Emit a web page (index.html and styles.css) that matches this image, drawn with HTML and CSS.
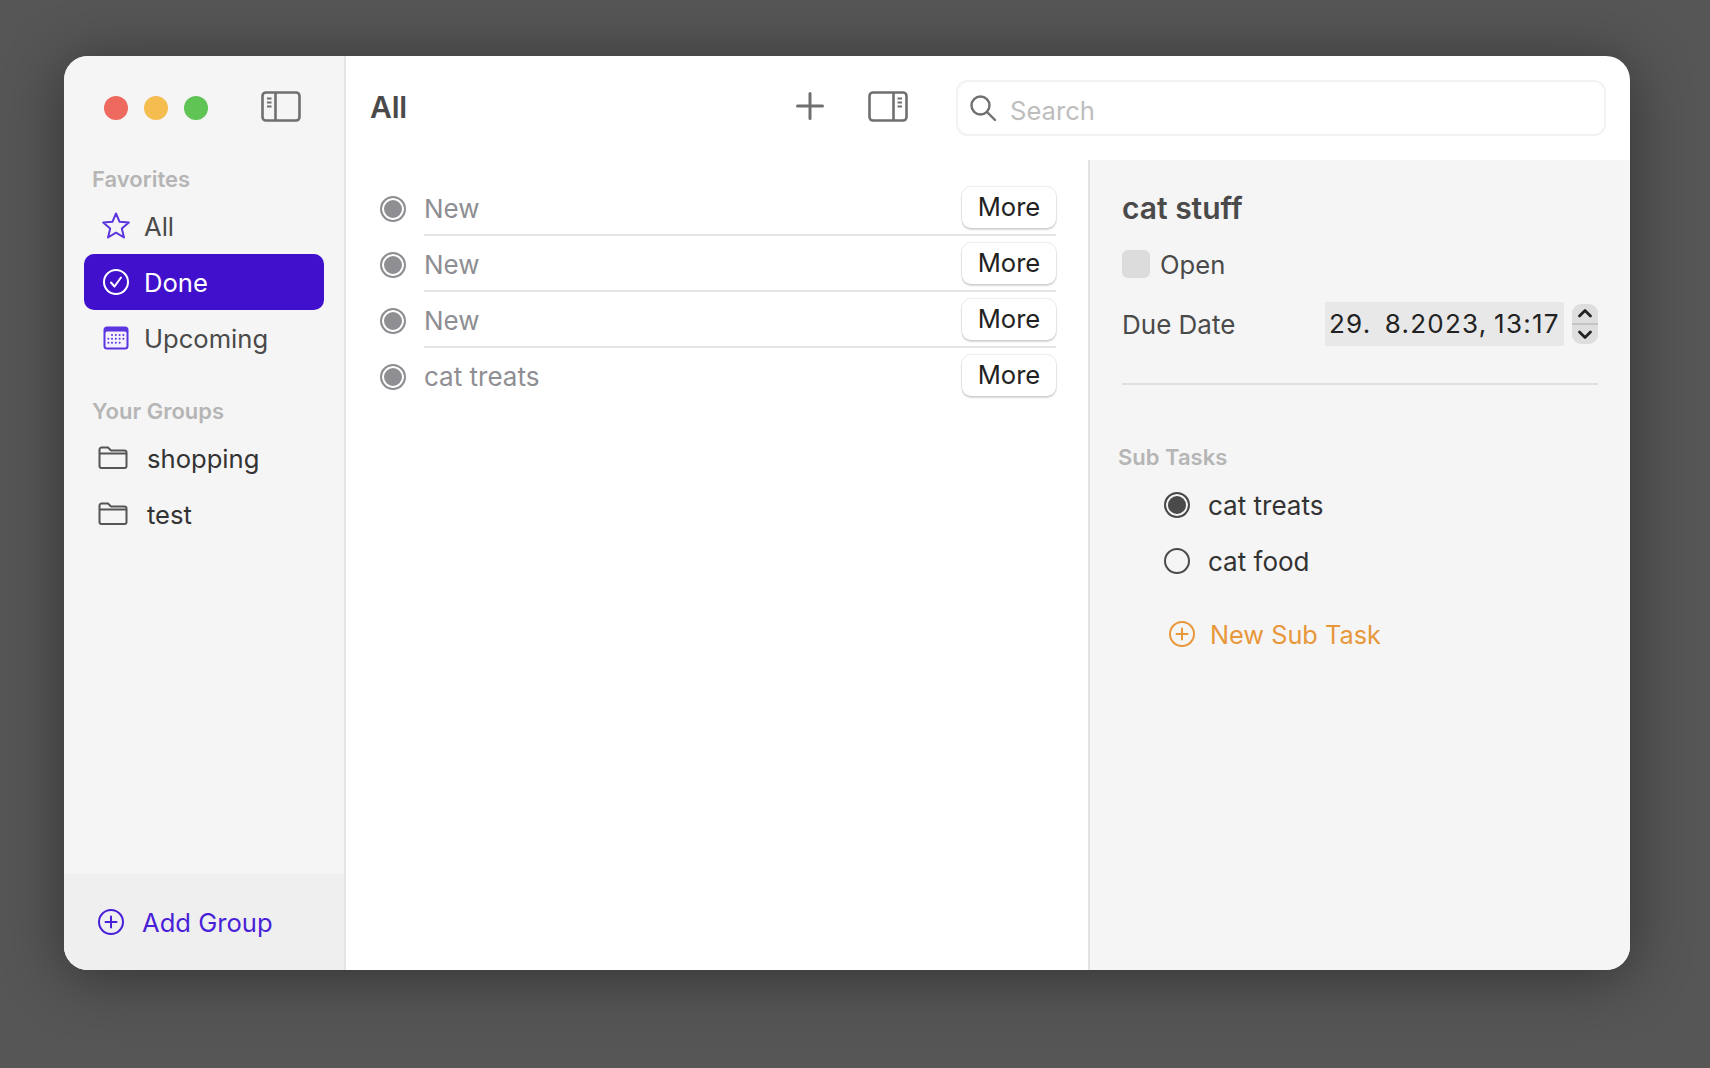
FILE: index.html
```html
<!DOCTYPE html>
<html lang="en">
<head>
<meta charset="utf-8">
<title>Tasks</title>
<link rel="stylesheet" href="styles.css">
</head>
<body>
<div class="window">
  <aside class="sidebar">
    <div class="side-top">
      <div class="titlebar">
        <span class="light red"></span><span class="light yellow"></span><span class="light green"></span>
        <svg class="side-toggle" width="40" height="31" viewBox="0 0 40 31" fill="none" stroke="#6f6f6f" stroke-width="2.6"><rect x="1.500" y="1.500" width="37" height="28" rx="3.500"/><path d="M14.500 1.500v28"/><path d="M6 7.500h4.500M6 11.500h4.500M6 15.500h4.500" stroke-width="1.800"/></svg>
      </div>
      <div class="section-label">Favorites</div>
      <div class="side-row">
        <svg class="ico" width="30" height="30" viewBox="0 0 30 30" fill="none" stroke="#5b35e0" stroke-width="2" stroke-linejoin="round"><path d="M15 2.500l3.600 8.300 9.200.8-7 6 2.200 8.900-8-4.800-8 4.800 2.200-8.900-7-6 9.200-.8z"/></svg>
        <span>All</span>
      </div>
      <div class="side-row selected">
        <svg class="ico" width="30" height="30" viewBox="0 0 30 30" fill="none" stroke="#fff" stroke-width="2"><circle cx="15" cy="15" r="12"/><path d="M10 15.500l3.500 4 6.500-9" stroke-linecap="round" stroke-linejoin="round"/></svg>
        <span>Done</span>
      </div>
      <div class="side-row">
        <svg class="ico" width="30" height="30" viewBox="0 0 30 30"><rect x="2.500" y="3.500" width="25" height="23" rx="3.500" fill="#5b35e0"/><rect x="4.500" y="8.500" width="21" height="16" rx="1.500" fill="#f4f1fd"/><g fill="#5b35e0"><circle cx="11" cy="12" r="1"/><circle cx="14.800" cy="12" r="1"/><circle cx="18.600" cy="12" r="1"/><circle cx="22.400" cy="12" r="1"/><circle cx="7.400" cy="15.800" r="1"/><circle cx="11" cy="15.800" r="1"/><circle cx="14.800" cy="15.800" r="1"/><circle cx="18.600" cy="15.800" r="1"/><circle cx="22.400" cy="15.800" r="1"/><circle cx="7.400" cy="19.800" r="1"/><circle cx="11" cy="19.800" r="1"/><circle cx="14.800" cy="19.800" r="1"/><circle cx="18.600" cy="19.800" r="1"/></g></svg>
        <span>Upcoming</span>
      </div>
      <div class="section-label groups">Your Groups</div>
      <div class="side-row group">
        <svg class="folder" width="30" height="24" viewBox="0 0 30 24" fill="none" stroke="#555" stroke-width="2"><path d="M1.500 20V3.500A2 2 0 0 1 3.500 1.500h6.500l3 3h13.500a2 2 0 0 1 2 2V20a2 2 0 0 1-2 2h-23a2 2 0 0 1-2-2z"/><path d="M1.500 7.500h27"/></svg>
        <span>shopping</span>
      </div>
      <div class="side-row group">
        <svg class="folder" width="30" height="24" viewBox="0 0 30 24" fill="none" stroke="#555" stroke-width="2"><path d="M1.500 20V3.500A2 2 0 0 1 3.500 1.500h6.500l3 3h13.500a2 2 0 0 1 2 2V20a2 2 0 0 1-2 2h-23a2 2 0 0 1-2-2z"/><path d="M1.500 7.500h27"/></svg>
        <span>test</span>
      </div>
    </div>
    <div class="side-foot">
      <svg width="28" height="28" viewBox="0 0 28 28" fill="none" stroke="#4a1fd8" stroke-width="2"><circle cx="14" cy="14" r="12"/><path d="M14 8.500v11M8.500 14h11" stroke-linecap="round"/></svg>
      <span>Add Group</span>
    </div>
  </aside>
  <div class="content">
    <header class="toolbar">
      <h1 class="page-title">All</h1>
      <svg class="plus" width="28" height="28" viewBox="0 0 28 28" stroke="#6f6f6f" stroke-width="3" stroke-linecap="round"><path d="M14 1.500v25M1.500 14h25"/></svg>
      <svg class="panel-toggle" width="40" height="31" viewBox="0 0 40 31" fill="none" stroke="#6f6f6f" stroke-width="2.600"><rect x="1.500" y="1.500" width="37" height="28" rx="3.500"/><path d="M25.500 1.500v28"/><path d="M29.500 7.500H34M29.500 11.500H34M29.500 15.500H34" stroke-width="1.800"/></svg>
      <div class="search">
        <svg width="28" height="28" viewBox="0 0 28 28" fill="none" stroke="#707070" stroke-width="2.400"><circle cx="11.500" cy="11.500" r="9"/><path d="M18 18l8 8" stroke-linecap="round"/></svg>
        <span class="search-text">Search</span>
      </div>
    </header>
    <div class="body">
      <main class="list">
        <div class="task"><span class="radio"></span><div class="task-main"><span class="task-name">New</span><button class="more">More</button></div></div>
        <div class="task"><span class="radio"></span><div class="task-main"><span class="task-name">New</span><button class="more">More</button></div></div>
        <div class="task"><span class="radio"></span><div class="task-main"><span class="task-name">New</span><button class="more">More</button></div></div>
        <div class="task last"><span class="radio"></span><div class="task-main"><span class="task-name">cat treats</span><button class="more">More</button></div></div>
      </main>
      <section class="detail">
        <h2 class="detail-title">cat stuff</h2>
        <div class="open-row"><span class="check"></span><span>Open</span></div>
        <div class="due-row">
          <span>Due Date</span>
          <div class="due-controls">
            <span class="date-field">29.&nbsp; 8.2023, 13:17</span>
            <span class="stepper">
              <svg width="16" height="10" viewBox="0 0 16 10" fill="none" stroke="#222" stroke-width="2.800" stroke-linecap="round" stroke-linejoin="round"><path d="M2.500 8L8 2.500 13.500 8"/></svg>
              <svg width="16" height="10" viewBox="0 0 16 10" fill="none" stroke="#222" stroke-width="2.800" stroke-linecap="round" stroke-linejoin="round"><path d="M2.500 2L8 7.500 13.500 2"/></svg>
            </span>
          </div>
        </div>
        <div class="divider"></div>
        <div class="sub-label">Sub Tasks</div>
        <div class="sub-row"><span class="sub-radio on"></span><span>cat treats</span></div>
        <div class="sub-row"><span class="sub-radio"></span><span>cat food</span></div>
        <div class="new-sub">
          <svg width="28" height="28" viewBox="0 0 28 28" fill="none" stroke="#e8973a" stroke-width="2"><circle cx="14" cy="14" r="12"/><path d="M14 8.500v11M8.500 14h11" stroke-linecap="round"/></svg>
          <span>New Sub Task</span>
        </div>
      </section>
    </div>
  </div>
</div>
</body>
</html>
```

FILE: styles.css
```css
* { box-sizing: border-box; }
html, body { height: 100%; }
body {
  margin: 0;
  padding: 56px 0 0 64px;
  background: #565656;
  font-family: Inter, "Liberation Sans", sans-serif;
  font-size: 26px;
  color: #4a4a4a;
  overflow: hidden;
}
.window {
  display: flex;
  width: 1566px;
  height: 914px;
  border-radius: 24px;
  overflow: hidden;
  background: #fff;
  box-shadow: 0 6px 60px rgba(0, 0, 0, .42);
}
.sidebar {
  width: 282px;
  flex: none;
  display: flex;
  flex-direction: column;
  background: #f5f5f5;
  border-right: 2px solid #e6e6e6;
  font-size: 25.6px;
}
.side-top { flex: 1; }
.titlebar {
  display: flex;
  align-items: center;
  height: 104px;
  padding: 0 0 0 40px;
}
.light { width: 24px; height: 24px; border-radius: 50%; margin-right: 16px; }
.red { background: #ee695e; }
.yellow { background: #f5bd4f; }
.green { background: #5fc454; }
.side-toggle { margin-left: 37px; margin-top: -4px; }
.section-label {
  margin: 0 0 0 28px;
  height: 38px;
  line-height: 38px;
  font-size: 22px;
  font-weight: 600;
  color: #b5b5b5;
}
.groups { margin-top: 26px; }
.side-row {
  display: flex;
  align-items: center;
  height: 56px;
  margin: 0 20px;
  padding-left: 17px;
  border-radius: 10px;
  gap: 13px;
}
.selected { background: #4010cc; color: #fff; }
.ico { flex: none; }
.group { color: #333; padding-left: 14px; gap: 19px; }
.side-foot {
  height: 96px;
  display: flex;
  align-items: center;
  gap: 17px;
  padding: 0 0 0 33px;
  background: #efefef;
  color: #4a1fd8;
}
.content { flex: 1; display: flex; flex-direction: column; min-width: 0; }
.toolbar {
  height: 104px;
  flex: none;
  display: flex;
  align-items: center;
}
.page-title {
  margin: -2px 0 0 24px;
  font-size: 30px;
  font-weight: 600;
  letter-spacing: -.2px;
  color: #4a4a4a;
  width: 426px;
}
.plus { margin-top: -4px; }
.panel-toggle { margin: -4px 0 0 44px; }
.search {
  display: flex;
  align-items: center;
  gap: 13px;
  width: 650px;
  height: 56px;
  margin: 0 0 0 48px;
  padding: 0 0 0 11px;
  border: 2px solid #f2f2f2;
  border-radius: 12px;
  color: #bdbdbd;
  font-size: 25.6px;
}
.search-text { padding-top: 4px; }
.body { flex: 1; display: flex; min-height: 0; }
.list { flex: 1; padding: 20px 0 0 0; }
.task { display: flex; align-items: flex-start; height: 56px; color: #8e8e93; }
.radio {
  flex: none;
  width: 26px;
  height: 26px;
  margin: 16px 0 0 34px;
  border-radius: 50%;
  border: 2px solid #8e8e93;
  background: #8e8e93;
  box-shadow: inset 0 0 0 2px #fff;
}
.task-main {
  flex: 1;
  height: 56px;
  margin: 0 32px 0 18px;
  display: flex;
  align-items: center;
  justify-content: space-between;
  border-bottom: 2px solid #e4e4e4;
}
.task-name { padding-top: 2px; }
.last .task-main { border-bottom-color: transparent; }
.more {
  width: 94px;
  height: 41px;
  padding: 0 0 2px 0;
  border: 0;
  border-radius: 9px;
  background: #fff;
  box-shadow: 0 0 1px 1px rgba(0, 0, 0, .08), 0 2px 2px rgba(0, 0, 0, .14);
  font: inherit;
  font-size: 25.6px;
  color: #222;
}
.detail {
  width: 542px;
  flex: none;
  padding: 0 32px 0 32px;
  background: #f5f5f5;
  border-left: 2px solid #e2e2e2;
}
.detail-title {
  margin: 30px 0 0 0;
  height: 36px;
  line-height: 36px;
  font-size: 30px;
  font-weight: 600;
}
.open-row { display: flex; align-items: center; gap: 10px; height: 30px; margin-top: 23px; font-size: 25.6px; }
.check { width: 28px; height: 28px; border-radius: 6px; background: #dcdcdc; }
.due-row {
  display: flex;
  align-items: center;
  justify-content: space-between;
  height: 46px;
  margin-top: 22px;
}
.due-controls { display: flex; align-items: center; gap: 8px; }
.date-field {
  width: 239px;
  height: 44px;
  line-height: 44px;
  padding-left: 4px;
  background: #e8e8e8;
  color: #222;
  white-space: nowrap;
  letter-spacing: 1.25px;
  word-spacing: -2px;
}
.stepper {
  width: 26px;
  height: 40px;
  display: flex;
  flex-direction: column;
  align-items: center;
  justify-content: space-between;
  padding: 4px 0;
  border-radius: 9px;
  background: linear-gradient(#dedede 0 48%, #c4c4c4 48% 53%, #dedede 53%);
}
.divider { height: 2px; margin-top: 36px; background: #dfdfdf; }
.sub-label {
  margin: 53px 0 0 -4px;
  height: 39px;
  line-height: 38px;
  font-size: 22px;
  font-weight: 600;
  color: #b5b5b5;
}
.sub-row {
  display: flex;
  align-items: center;
  gap: 18px;
  height: 56px;
  margin-left: 42px;
  color: #333;
}
.sub-radio {
  flex: none;
  width: 26px;
  height: 26px;
  border-radius: 50%;
  border: 2px solid #4a4a4a;
}
.sub-radio.on { background: #4a4a4a; box-shadow: inset 0 0 0 2px #f5f5f5; }
.new-sub {
  display: flex;
  align-items: center;
  gap: 14px;
  margin: 25px 0 0 46px;
  height: 40px;
  color: #e8973a;
  font-size: 25.3px;
}
```
